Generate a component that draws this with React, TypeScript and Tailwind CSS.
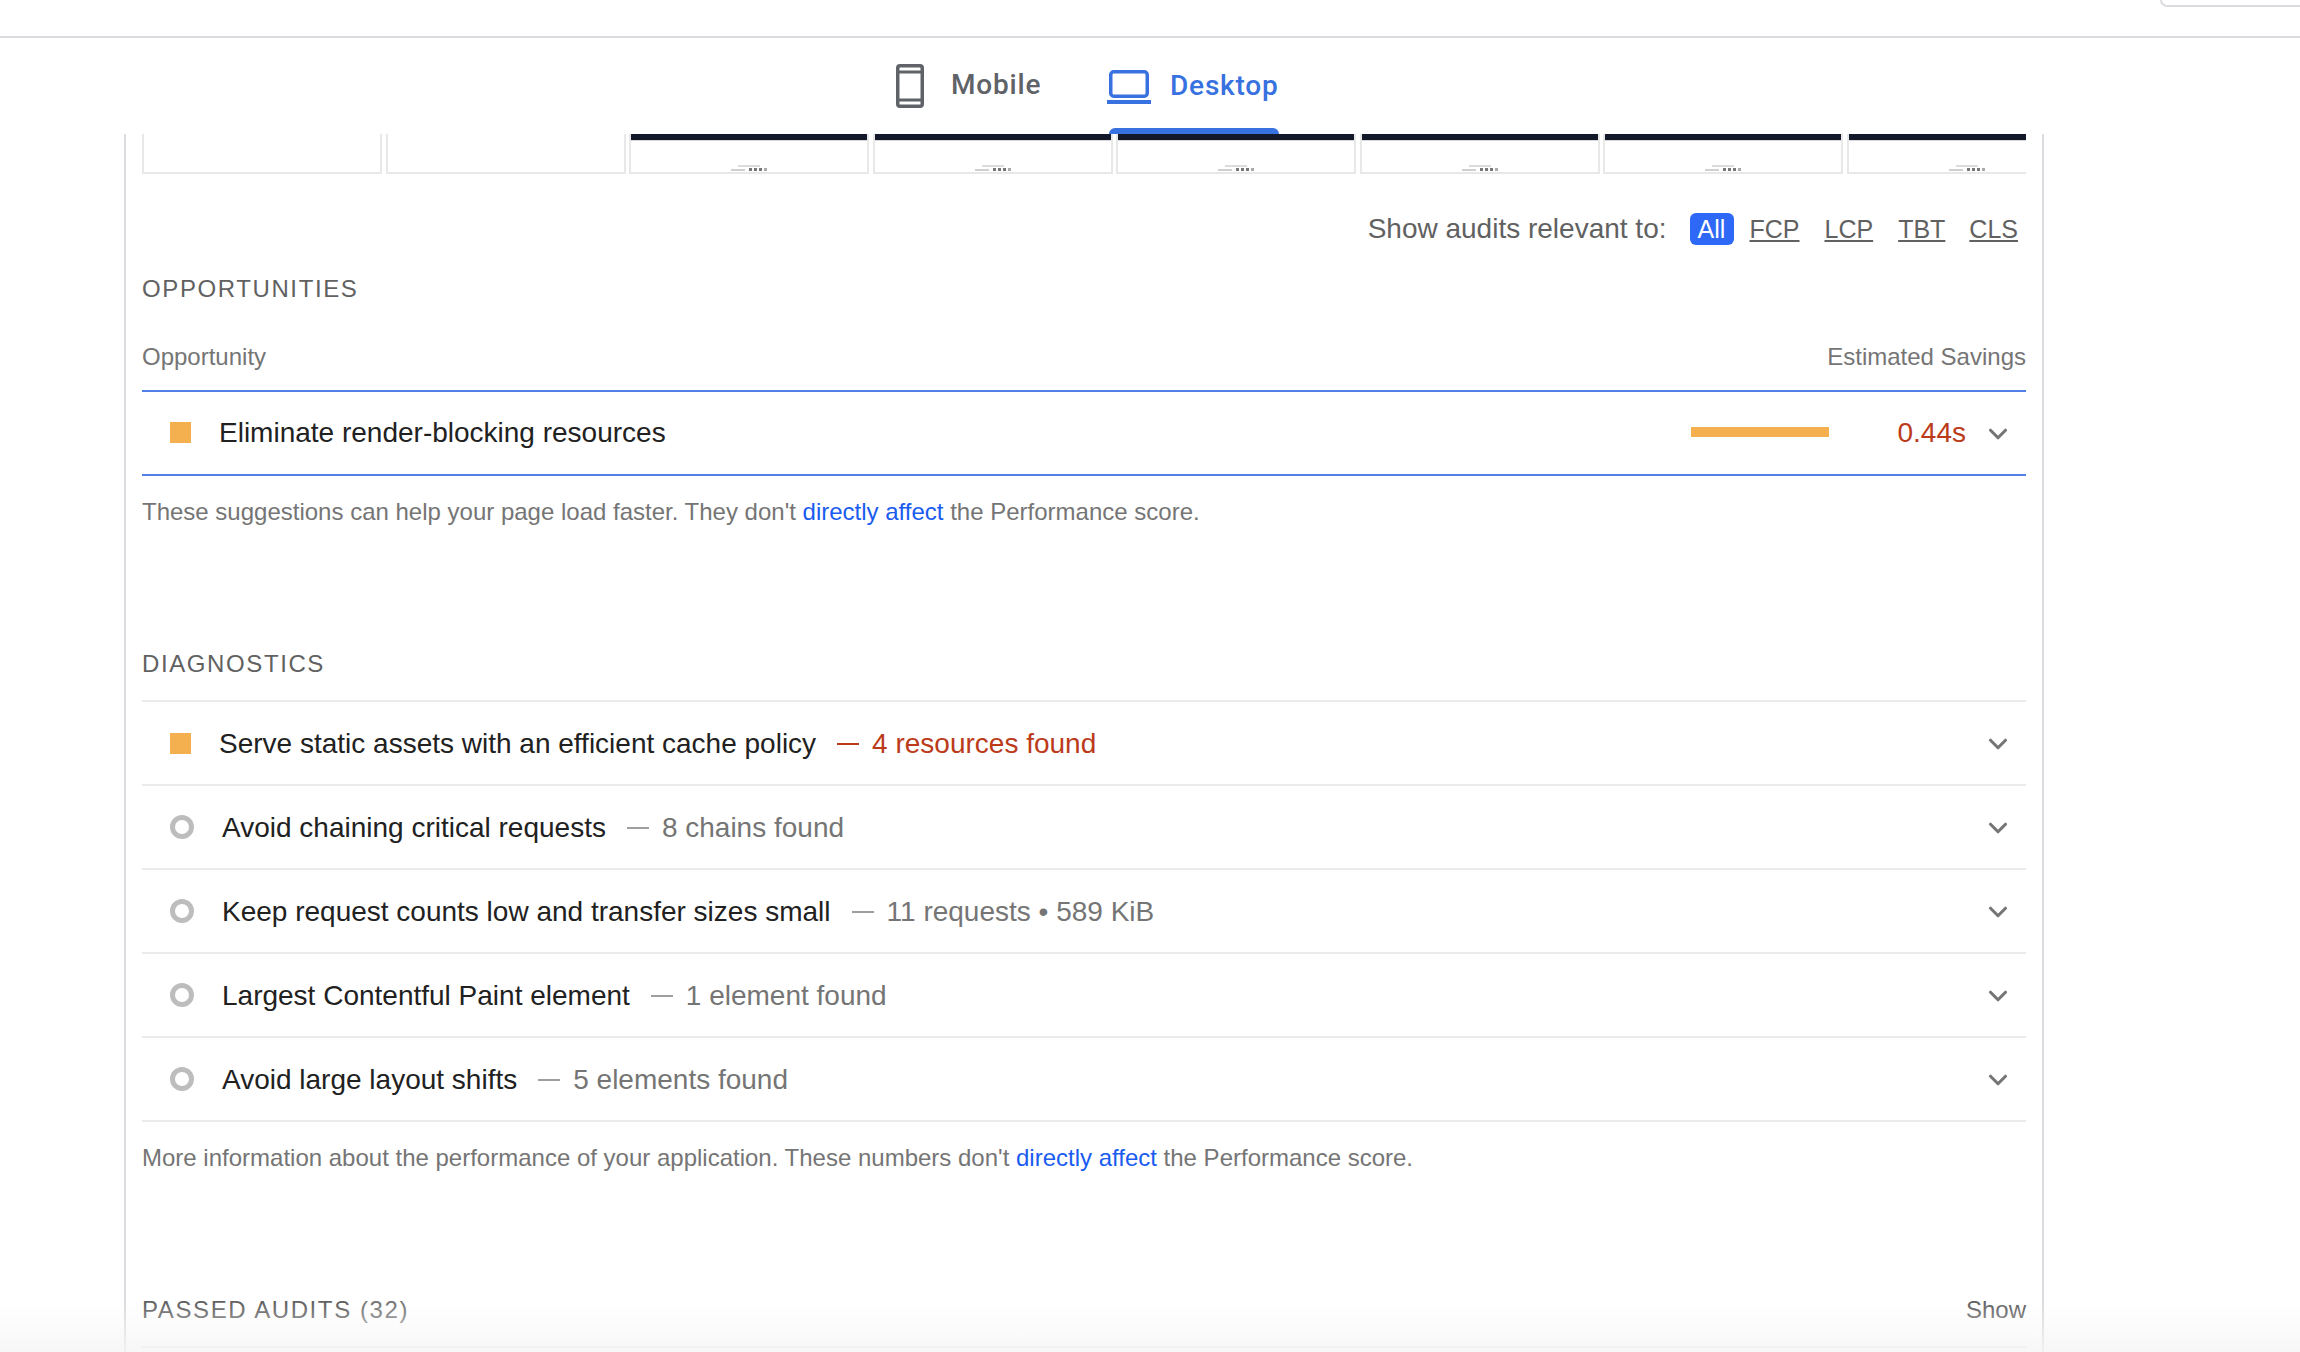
import React from 'react';
import { ChevronDown } from 'lucide-react';

const frames = [false, false, true, true, true, true, true, true];

function PhoneIcon() {
  return (
    <svg width="28" height="44" viewBox="0 0 28 44" className="block">
      <path
        fillRule="evenodd"
        fill="#5f6368"
        d="M4 0h20a4 4 0 0 1 4 4v36a4 4 0 0 1-4 4H4a4 4 0 0 1-4-4V4a4 4 0 0 1 4-4ZM3.500 4v2.500h21V4a.6.6 0 0 0-.6-.6H4.100A.6.6 0 0 0 3.500 4ZM3.500 9.500v25h21v-25ZM3.500 37.500V40a.6.6 0 0 0 .6.6h19.800a.6.6 0 0 0 .6-.6v-2.500Z"
      />
    </svg>
  );
}

function LaptopIcon() {
  return (
    <svg width="44" height="34" viewBox="0 0 44 34" className="block">
      <rect x="3.750" y="1.750" width="36.500" height="24.500" rx="3" fill="none" stroke="#3871e0" strokeWidth="3.500" />
      <rect x="0" y="30" width="44" height="4" fill="#3871e0" />
    </svg>
  );
}

function Frame({ filled }: { filled: boolean }) {
  return (
    <div className="w-[240px] h-[40px] shrink-0 border-x-2 border-b-2 border-[#e8e8e8] flex flex-col">
      {filled && (
        <>
          <div className="h-[7px] bg-[#14192a] border-b border-[#d8d8dc]" />
          <div className="flex-1 flex flex-col items-center justify-end pb-[1px] gap-[1px]">
            <div className="w-[22px] h-[2px] bg-[#dcdcdc]" />
            <div className="flex items-center gap-[2px]">
              <div className="w-[14px] h-[2px] bg-[#d0d0d0] mr-[2px]" />
              <div className="w-[3px] h-[3px] bg-[#777777]" />
              <div className="w-[3px] h-[3px] bg-[#777777]" />
              <div className="w-[3px] h-[3px] bg-[#777777]" />
              <div className="w-[3px] h-[3px] bg-[#aaaaaa]" />
            </div>
          </div>
        </>
      )}
    </div>
  );
}

function Chevron() {
  return <ChevronDown className="w-[30px] h-[30px] mt-[2px] text-[#757575]" strokeWidth={2.5} />;
}

function AuditRow({ warn, title, detail }: { warn?: boolean; title: string; detail: string }) {
  const tone = warn ? 'text-[#bb3a1a]' : 'text-[#757575]';
  return (
    <div className="h-[84px] border-b-2 border-[#ebebeb] flex items-center pl-[28px] pr-[13px]">
      {warn ? (
        <div className="w-[21px] h-[21px] bg-[#f4af4f] mr-[28px] shrink-0" />
      ) : (
        <div className="w-[24px] h-[24px] rounded-full border-[5px] border-[#bdbdbd] mr-[28px] shrink-0" />
      )}
      <span className="text-[#212121] mt-[2px]">{title}</span>
      <span className={`ml-[21px] mt-[2px] w-[22px] h-[2px] ${warn ? 'bg-[#bb3a1a]' : 'bg-[#9e9e9e]'}`} />
      <span className={`ml-[13px] mt-[2px] ${tone}`}>{detail}</span>
      <div className="ml-auto flex">
        <Chevron />
      </div>
    </div>
  );
}

export default function App() {
  return (
    <div className="relative w-[2300px] h-[1352px] overflow-hidden bg-white font-['Liberation_Sans',Arial,sans-serif]">
      {/* Browser strip */}
      <div className="h-[38px] border-b-2 border-[#dadce0] flex justify-end">
        <div className="w-[140px] h-[7px] border-l-2 border-b-2 border-[#dadce0] rounded-bl-[8px]" />
      </div>

      {/* Device tabs */}
      <div className="h-[96px] flex pl-[896px] font-['Roboto',sans-serif] text-[28px] font-medium tracking-[0.8px]">
        <div className="flex items-start gap-[27px] pt-[26px] w-[211px] shrink-0 text-[#5f6368]">
          <PhoneIcon />
          <span className="leading-[42px]">Mobile</span>
        </div>
        <div className="flex flex-col">
          <div className="flex items-start gap-[19px] pt-[32px] text-[#3871e0]">
            <LaptopIcon />
            <span className="leading-[32px]">Desktop</span>
          </div>
          <div className="mt-auto ml-[2px] h-[6px] bg-[#3871e0] rounded-t-[6px]" />
        </div>
      </div>

      {/* Report panel */}
      <div className="ml-[124px] w-[1920px] h-[1218px] border-x-2 border-[#dcdce0] px-[16px] text-[28px] leading-[32px]">
        <div className="flex gap-[3.5px] overflow-hidden">
          {frames.map((filled, i) => (
            <Frame key={i} filled={filled} />
          ))}
        </div>

        <div className="flex items-center justify-end h-[32px] mt-[39px] pr-[8px] text-[#616161]">
          <span className="mr-[23px]">Show audits relevant to:</span>
          <span className="bg-[#2d68f6] text-white rounded-[6px] w-[44px] text-center mr-[16px] text-[25px]">All</span>
          <span className="underline mr-[25px] text-[25px]">FCP</span>
          <span className="underline mr-[25px] text-[25px]">LCP</span>
          <span className="underline mr-[24px] text-[25px]">TBT</span>
          <span className="underline text-[25px]">CLS</span>
        </div>

        {/* Opportunities */}
        <div className="mt-[30px] text-[24px] leading-[28px] tracking-[1.6px] text-[#616161]">OPPORTUNITIES</div>
        <div className="flex justify-between mt-[40px] text-[24px] leading-[28px] text-[#757575] h-[47px]">
          <span>Opportunity</span>
          <span>Estimated Savings</span>
        </div>
        <div className="h-[86px] border-y-2 border-[#5080e8] flex items-center pl-[28px] pr-[13px]">
          <div className="w-[21px] h-[21px] bg-[#f4af4f] mr-[28px] mb-[2px]" />
          <span className="text-[#212121]">Eliminate render-blocking resources</span>
          <div className="ml-auto w-[138px] h-[10px] bg-[#f4af4f] mr-[69px] mb-[2px]" />
          <span className="text-[#bb3a1a] mr-[17px]">0.44s</span>
          <Chevron />
        </div>
        <p className="mt-[22px] text-[24px] leading-[28px] text-[#757575]">
          These suggestions can help your page load faster. They don't <span className="text-[#1a5cf0]">directly affect</span> the Performance score.
        </p>

        {/* Diagnostics */}
        <div className="mt-[124px] text-[24px] leading-[28px] tracking-[1.6px] text-[#616161]">DIAGNOSTICS</div>
        <div className="mt-[22px] border-t-2 border-[#ebebeb]">
          <AuditRow warn title="Serve static assets with an efficient cache policy" detail="4 resources found" />
          <AuditRow title="Avoid chaining critical requests" detail="8 chains found" />
          <AuditRow title="Keep request counts low and transfer sizes small" detail="11 requests • 589 KiB" />
          <AuditRow title="Largest Contentful Paint element" detail="1 element found" />
          <AuditRow title="Avoid large layout shifts" detail="5 elements found" />
        </div>
        <p className="mt-[22px] text-[24px] leading-[28px] text-[#757575]">
          More information about the performance of your application. These numbers don't <span className="text-[#1a5cf0]">directly affect</span> the Performance score.
        </p>

        {/* Passed audits */}
        <div className="mt-[124px] flex justify-between items-center h-[28px] text-[24px] leading-[28px] text-[#616161]">
          <span className="tracking-[1.6px]">
            PASSED AUDITS <span className="text-[#757575]">(32)</span>
          </span>
          <span>Show</span>
        </div>
        <div className="mt-[22px] h-[2px] bg-[#e8e8e8]" />
      </div>

      {/* Fade over the bottom edge */}
      <div className="absolute left-0 right-0 bottom-0 h-[50px] bg-gradient-to-b from-transparent to-[#f5f5f5]/80 pointer-events-none" />
    </div>
  );
}
